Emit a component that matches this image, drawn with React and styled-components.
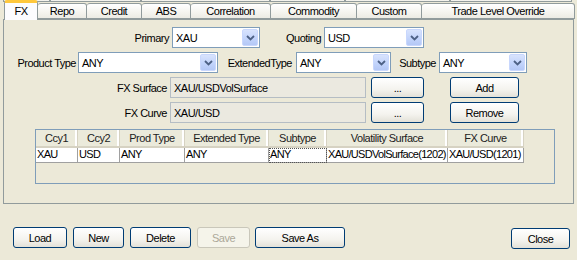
import React from 'react'
import styled, { createGlobalStyle } from 'styled-components'

const GlobalStyle = createGlobalStyle`
  html, body {
    margin: 0;
    padding: 0;
    background: #ECE9D8;
  }
  body {
    font-family: Tahoma, "Liberation Sans", "DejaVu Sans", sans-serif;
    font-size: 11px;
    letter-spacing: -0.5px;
    color: #000;
  }
`

const Window = styled.div`
  width: 577px;
  height: 260px;
  background: #ECE9D8;
  overflow: hidden;
`

const TopStrip = styled.div`
  display: flex;
  height: 3px;
  padding-left: 3px;
  overflow: hidden;
`

const StubTab = styled.div`
  width: ${p => p.$w}px;
  height: 6px;
  margin-top: -4px;
  border: 1px solid #919B9C;
  border-top: none;
  background: linear-gradient(#fff, #F2F1EA);
  box-sizing: border-box;
`

const TabRow = styled.div`
  display: flex;
  align-items: flex-end;
  height: 19px;
  margin-top: -3px;
  padding-left: 4px;
  position: relative;
  z-index: 2;
`

const Tab = styled.div`
  width: ${p => p.$w}px;
  height: ${p => (p.$active ? 20 : 16)}px;
  margin-bottom: ${p => (p.$active ? -1 : 0)}px;
  box-sizing: border-box;
  border: 1px solid #919B9C;
  border-left-width: ${p => (p.$active ? 1 : 0)}px;
  border-bottom-width: ${p => (p.$active ? 0 : 1)}px;
  border-top: ${p => (p.$active ? '3px solid #FFC83C' : '1px solid #919B9C')};
  border-radius: 3px 3px 0 0;
  background: ${p =>
    p.$active
      ? '#FCFCFE'
      : 'linear-gradient(#FFFFFF, #F3F2EC 70%, #ECEBE4)'};
  display: flex;
  align-items: center;
  justify-content: center;
  padding-bottom: ${p => (p.$active ? 2 : 1)}px;
`

const Panel = styled.div`
  margin-left: 3px;
  width: 571px;
  height: 185px;
  box-sizing: border-box;
  border: 1px solid #919B9C;
  background: #ECE9D8;
  padding-top: 7px;
  display: flex;
  flex-direction: column;
`

const FormRow = styled.div`
  display: flex;
  align-items: center;
  height: 21px;
  margin-bottom: 4px;
`

const Label = styled.div`
  width: ${p => p.$w}px;
  flex: none;
  text-align: right;
  padding-right: ${p => p.$pad ?? 3}px;
  box-sizing: border-box;
  white-space: nowrap;
`

const ComboBox = styled.div`
  width: ${p => p.$w}px;
  height: 21px;
  flex: none;
  box-sizing: border-box;
  border: 1px solid #7F9DB9;
  background: #fff;
  display: flex;
  align-items: center;
  padding: 1px;
`

const ComboText = styled.span`
  flex: 1;
  padding-left: 2px;
`

const ComboArrow = styled.div`
  width: 16px;
  height: 17px;
  border-radius: 2px;
  background: linear-gradient(#D8E3FD, #C1D3FB 60%, #B4C8F6);
  border: 1px solid #C8D7FD;
  box-sizing: border-box;
  display: flex;
  align-items: center;
  justify-content: center;
`

const TextField = styled.div`
  width: ${p => p.$w}px;
  height: 21px;
  flex: none;
  box-sizing: border-box;
  border: 1px solid #B5BDC4;
  background: #EBE9E0;
  display: flex;
  align-items: center;
  padding-left: 3px;
`

const Button = styled.div`
  width: ${p => p.$w}px;
  height: 21px;
  flex: none;
  box-sizing: border-box;
  margin-left: ${p => p.$ml ?? 0}px;
  margin-top: ${p => p.$mt ?? 0}px;
  margin-right: ${p => p.$mr ?? 0}px;
  border: 1px solid ${p => (p.$disabled ? '#C9C7BA' : '#003C74')};
  border-radius: 3px;
  background: ${p =>
    p.$disabled
      ? '#F5F4EA'
      : 'linear-gradient(#FFFFFF, #F4F3EE 60%, #E3E1D8)'};
  color: ${p => (p.$disabled ? '#ACA899' : '#000')};
  display: flex;
  align-items: center;
  justify-content: center;
`

const TableBox = styled.div`
  margin: 2px 0 0 31px;
  width: 520px;
  height: 55px;
  box-sizing: border-box;
  border: 1px solid #7F9DB9;
  background: #ECE9D8;
`

const HeaderRow = styled.div`
  display: flex;
  height: 18px;
`

const HeaderCell = styled.div`
  width: ${p => p.$w}px;
  flex: none;
  box-sizing: border-box;
  background: #EBEADB;
  border-bottom: 2px solid #D6D2C2;
  border-right: 1px solid #D6D2C2;
  box-shadow: inset -2px 0 0 #fff;
  display: flex;
  align-items: center;
  justify-content: center;
  color: #222;
`

const DataRow = styled.div`
  display: flex;
  height: 15px;
`

const DataCell = styled.div`
  width: ${p => p.$w}px;
  flex: none;
  box-sizing: border-box;
  background: #fff;
  border-right: 1px solid #A0A0A0;
  border-bottom: 1px solid #A0A0A0;
  padding-left: 1px;
  line-height: 13px;
  letter-spacing: -0.7px;
  white-space: nowrap;
  overflow: hidden;
  ${p => p.$focus && 'outline: 1px dotted #555; outline-offset: -1px;'}
`

const BottomBar = styled.div`
  display: flex;
  align-items: flex-start;
  margin-top: 23px;
  padding-left: 13px;
`

const Spacer = styled.div`
  flex: 1;
`

const Chevron = () => (
  <svg width="9" height="6" viewBox="0 0 9 6">
    <path d="M1 1 L4.5 4.5 L8 1" fill="none" stroke="#4D6185" strokeWidth="1.8" />
  </svg>
)

const Combo = ({ w, value }) => (
  <ComboBox $w={w}>
    <ComboText>{value}</ComboText>
    <ComboArrow>
      <Chevron />
    </ComboArrow>
  </ComboBox>
)

const tabs = [
  ['FX', 34],
  ['Repo', 49],
  ['Credit', 55],
  ['ABS', 49],
  ['Correlation', 80],
  ['Commodity', 86],
  ['Custom', 65],
  ['Trade Level Override', 153],
]

const columns = [
  ['Ccy1', 42, 'XAU'],
  ['Ccy2', 42, 'USD'],
  ['Prod Type', 65, 'ANY'],
  ['Extended Type', 84, 'ANY'],
  ['Subtype', 58, 'ANY'],
  ['Volatility Surface', 121, 'XAU/USDVolSurface(1202)'],
  ['FX Curve', 76, 'XAU/USD(1201)'],
]

const App = () => {
  return (
    <Window>
      <GlobalStyle />
      <TopStrip>
        <StubTab $w={47} />
        <StubTab $w={91} />
        <StubTab $w={129} />
        <StubTab $w={75} />
        <StubTab $w={105} />
        <StubTab $w={122} />
      </TopStrip>
      <TabRow>
        {tabs.map(([name, w], i) => (
          <Tab key={name} $w={w} $active={i === 0}>
            {name}
          </Tab>
        ))}
      </TabRow>
      <Panel>
        <FormRow>
          <Label $w={168}>Primary</Label>
          <Combo w={88} value="XAU" />
          <Label $w={64}>Quoting</Label>
          <Combo w={100} value="USD" />
        </FormRow>
        <FormRow>
          <Label $w={74} $pad={2}>Product Type</Label>
          <Combo w={140} value="ANY" />
          <Label $w={78} $pad={4}>ExtendedType</Label>
          <Combo w={95} value="ANY" />
          <Label $w={48}>Subtype</Label>
          <Combo w={88} value="ANY" />
        </FormRow>
        <FormRow>
          <Label $w={166}>FX Surface</Label>
          <TextField $w={196}>XAU/USDVolSurface</TextField>
          <Button $w={53} $ml={5}>...</Button>
          <Button $w={69} $ml={26}>Add</Button>
        </FormRow>
        <FormRow>
          <Label $w={166}>FX Curve</Label>
          <TextField $w={196}>XAU/USD</TextField>
          <Button $w={53} $ml={5}>...</Button>
          <Button $w={69} $ml={26}>Remove</Button>
        </FormRow>
        <TableBox>
          <HeaderRow>
            {columns.map(([h, w]) => (
              <HeaderCell key={h} $w={w}>{h}</HeaderCell>
            ))}
          </HeaderRow>
          <DataRow>
            {columns.map(([h, w, v]) => (
              <DataCell key={h} $w={w} $focus={h === 'Subtype'}>{v}</DataCell>
            ))}
          </DataRow>
        </TableBox>
      </Panel>
      <BottomBar>
        <Button $w={54}>Load</Button>
        <Button $w={51} $ml={6}>New</Button>
        <Button $w={61} $ml={6}>Delete</Button>
        <Button $w={53} $ml={6} $disabled>Save</Button>
        <Button $w={90} $ml={5}>Save As</Button>
        <Spacer />
        <Button $w={59} $mt={1} $mr={7}>Close</Button>
      </BottomBar>
    </Window>
  )
}

export default App
